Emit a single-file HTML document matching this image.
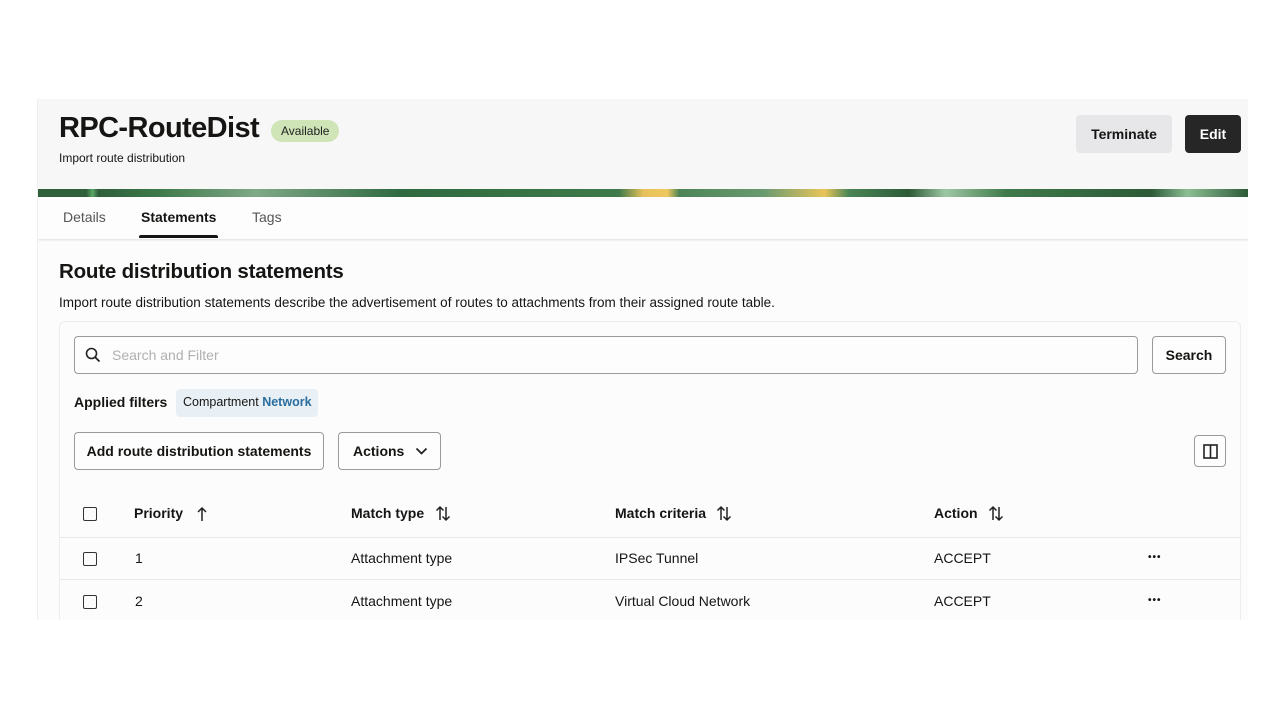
<!DOCTYPE html>
<html><head><meta charset="utf-8"><style>
*{box-sizing:border-box;margin:0;padding:0}
body{width:1280px;height:720px;background:#fff;font-family:"Liberation Sans",sans-serif;color:#161513;position:relative;overflow:hidden}
.panel{position:absolute;left:37px;top:99px;width:1211px;height:521px;background:#fcfcfc;overflow:hidden;border-left:1px solid #eee}
.hdr{position:absolute;left:0;top:0;width:100%;height:90px;background:#f7f7f7}
.title{position:absolute;left:21px;top:13px;font-size:29px;font-weight:bold;letter-spacing:-0.6px}
.badge{position:absolute;left:233px;top:21px;background:#cfe5b8;border-radius:11px;font-size:12px;padding:4px 10px;color:#222}
.sub{position:absolute;left:21px;top:52px;font-size:12px}
.btn{position:absolute;border-radius:4px;font-size:14px;font-weight:bold;display:flex;align-items:center;justify-content:center}
.banner{position:absolute;left:0;top:90px;width:100%;height:8px;background:linear-gradient(90deg,#2f5f3b 0,#2f5f3b 4%,#5aa866 4.5%,#2f5f3b 5%,#3d7a4a 10%,#80a887 18%,#2f6a3f 30%,#3f7a4a 48%,#e6c05a 50%,#f0c860 52%,#4c8557 53%,#6a9a70 60%,#e8c55a 65%,#4a8556 67%,#2d5a37 72%,#9fc7a4 75%,#3f7a4a 80%,#2d5a37 92%,#8cbf93 95%,#2d5a37 100%)}
.tabs{position:absolute;left:0;top:98px;width:100%;height:42px;background:#fdfdfd;box-shadow:0 1px 2px rgba(0,0,0,.12)}
.tab{position:absolute;top:12px;font-size:14px;color:#555}
.h2{position:absolute;left:21px;top:161px;font-size:20.5px;font-weight:bold;letter-spacing:-0.2px}
.desc{position:absolute;left:21px;top:196px;font-size:13.5px}
.card{position:absolute;left:21px;top:222px;width:1182px;height:320px;border:1px solid #ececec;border-radius:6px;background:#fcfcfc}
.ob{position:absolute;border:1px solid #9a9a9a;border-radius:4px;background:#fdfdfd}
.th{position:absolute;top:406px;font-size:14px;font-weight:bold}
.td{position:absolute;font-size:14px}
.cb{position:absolute;left:45px;width:14px;height:14px;border:1.5px solid #333;border-radius:2px}
.row{position:absolute;left:21px;width:1182px;height:1px;background:#e8e8e8}
.dots{position:absolute;left:1110px;font-size:10px;font-weight:bold;letter-spacing:1px}
</style></head><body>
<div class="panel">
 <div class="hdr">
  <div class="title">RPC-RouteDist</div>
  <div class="badge">Available</div>
  <div class="sub">Import route distribution</div>
  <div class="btn" style="left:1038px;top:16px;width:96px;height:38px;background:#e7e7ea">Terminate</div>
  <div class="btn" style="left:1147px;top:16px;width:56px;height:38px;background:#262626;color:#fff">Edit</div>
 </div>
 <div class="banner"></div>
 <div class="tabs">
  <div class="tab" style="left:25px">Details</div>
  <div class="tab" style="left:103px;color:#161513;font-weight:bold">Statements</div>
  <div style="position:absolute;left:101px;top:38px;width:79px;height:3px;background:#161513;border-radius:2px 2px 0 0"></div>
  <div class="tab" style="left:214px">Tags</div>
 </div>
 <div class="h2">Route distribution statements</div>
 <div class="desc">Import route distribution statements describe the advertisement of routes to attachments from their assigned route table.</div>
 <div class="card"></div>
 <div class="ob" style="left:36px;top:237px;width:1064px;height:38px"></div>
 <svg style="position:absolute;left:47px;top:248px" width="16" height="16" viewBox="0 0 16 16"><circle cx="6.5" cy="6.5" r="5" fill="none" stroke="#222" stroke-width="1.6"/><path d="M10.2 10.2L14.5 14.5" stroke="#222" stroke-width="1.8"/></svg>
 <div class="td" style="left:74px;top:248px;color:#b0b0b0">Search and Filter</div>
 <div class="ob btn" style="left:1114px;top:237px;width:74px;height:38px;font-weight:bold">Search</div>
 <div class="td" style="left:36px;top:295px;font-weight:bold">Applied filters</div>
 <div style="position:absolute;left:138px;top:290px;width:142px;height:28px;background:#e8f0f5;border-radius:4px;font-size:12.5px;padding:6px 0 0 7px">Compartment <b style="color:#2a6ea0">Network</b></div>
 <div class="ob btn" style="left:36px;top:333px;width:250px;height:38px">Add route distribution statements</div>
 <div class="ob btn" style="left:300px;top:333px;width:103px;height:38px;justify-content:flex-start;padding-left:14px">Actions
  <svg style="position:absolute;left:76px;top:14px" width="13" height="9" viewBox="0 0 13 9"><path d="M1.5 1.5L6.5 6.5L11.5 1.5" fill="none" stroke="#222" stroke-width="1.8"/></svg></div>
 <div class="ob" style="left:1156px;top:336px;width:32px;height:32px">
  <svg style="position:absolute;left:8px;top:8px" width="15" height="15" viewBox="0 0 15 15"><rect x="1" y="1" width="13" height="13" fill="none" stroke="#222" stroke-width="1.6"/><path d="M7.5 1V14" stroke="#222" stroke-width="1.6"/></svg></div>
 <div class="cb" style="top:408px"></div>
 <div class="th" style="left:96px">Priority</div>
 <svg style="position:absolute;left:158px;top:407px" width="12" height="16" viewBox="0 0 12 16"><path d="M6 15V2M2 6L6 2L10 6" fill="none" stroke="#222" stroke-width="1.5"/></svg>
 <div class="th" style="left:313px">Match type</div>
 <div class="th" style="left:577px">Match criteria</div>
 <div class="th" style="left:896px">Action</div>
 <svg style="position:absolute;left:397px;top:406px" width="16" height="17" viewBox="0 0 16 17"><path d="M5 15V2M1.5 5.5L5 2L8.5 5.5M11 2V15M7.5 11.5L11 15L14.5 11.5" fill="none" stroke="#222" stroke-width="1.5"/></svg>
 <svg style="position:absolute;left:678px;top:406px" width="16" height="17" viewBox="0 0 16 17"><path d="M5 15V2M1.5 5.5L5 2L8.5 5.5M11 2V15M7.5 11.5L11 15L14.5 11.5" fill="none" stroke="#222" stroke-width="1.5"/></svg>
 <svg style="position:absolute;left:950px;top:406px" width="16" height="17" viewBox="0 0 16 17"><path d="M5 15V2M1.5 5.5L5 2L8.5 5.5M11 2V15M7.5 11.5L11 15L14.5 11.5" fill="none" stroke="#222" stroke-width="1.5"/></svg>
 <div class="row" style="top:438px"></div>
 <div class="cb" style="top:453px"></div>
 <div class="td" style="left:97px;top:451px">1</div>
 <div class="td" style="left:313px;top:451px">Attachment type</div>
 <div class="td" style="left:577px;top:451px">IPSec Tunnel</div>
 <div class="td" style="left:896px;top:451px">ACCEPT</div>
 <div class="dots" style="top:453px">•••</div>
 <div class="row" style="top:480px"></div>
 <div class="cb" style="top:496px"></div>
 <div class="td" style="left:97px;top:494px">2</div>
 <div class="td" style="left:313px;top:494px">Attachment type</div>
 <div class="td" style="left:577px;top:494px">Virtual Cloud Network</div>
 <div class="td" style="left:896px;top:494px">ACCEPT</div>
 <div class="dots" style="top:496px">•••</div>
</div>
</body></html>
